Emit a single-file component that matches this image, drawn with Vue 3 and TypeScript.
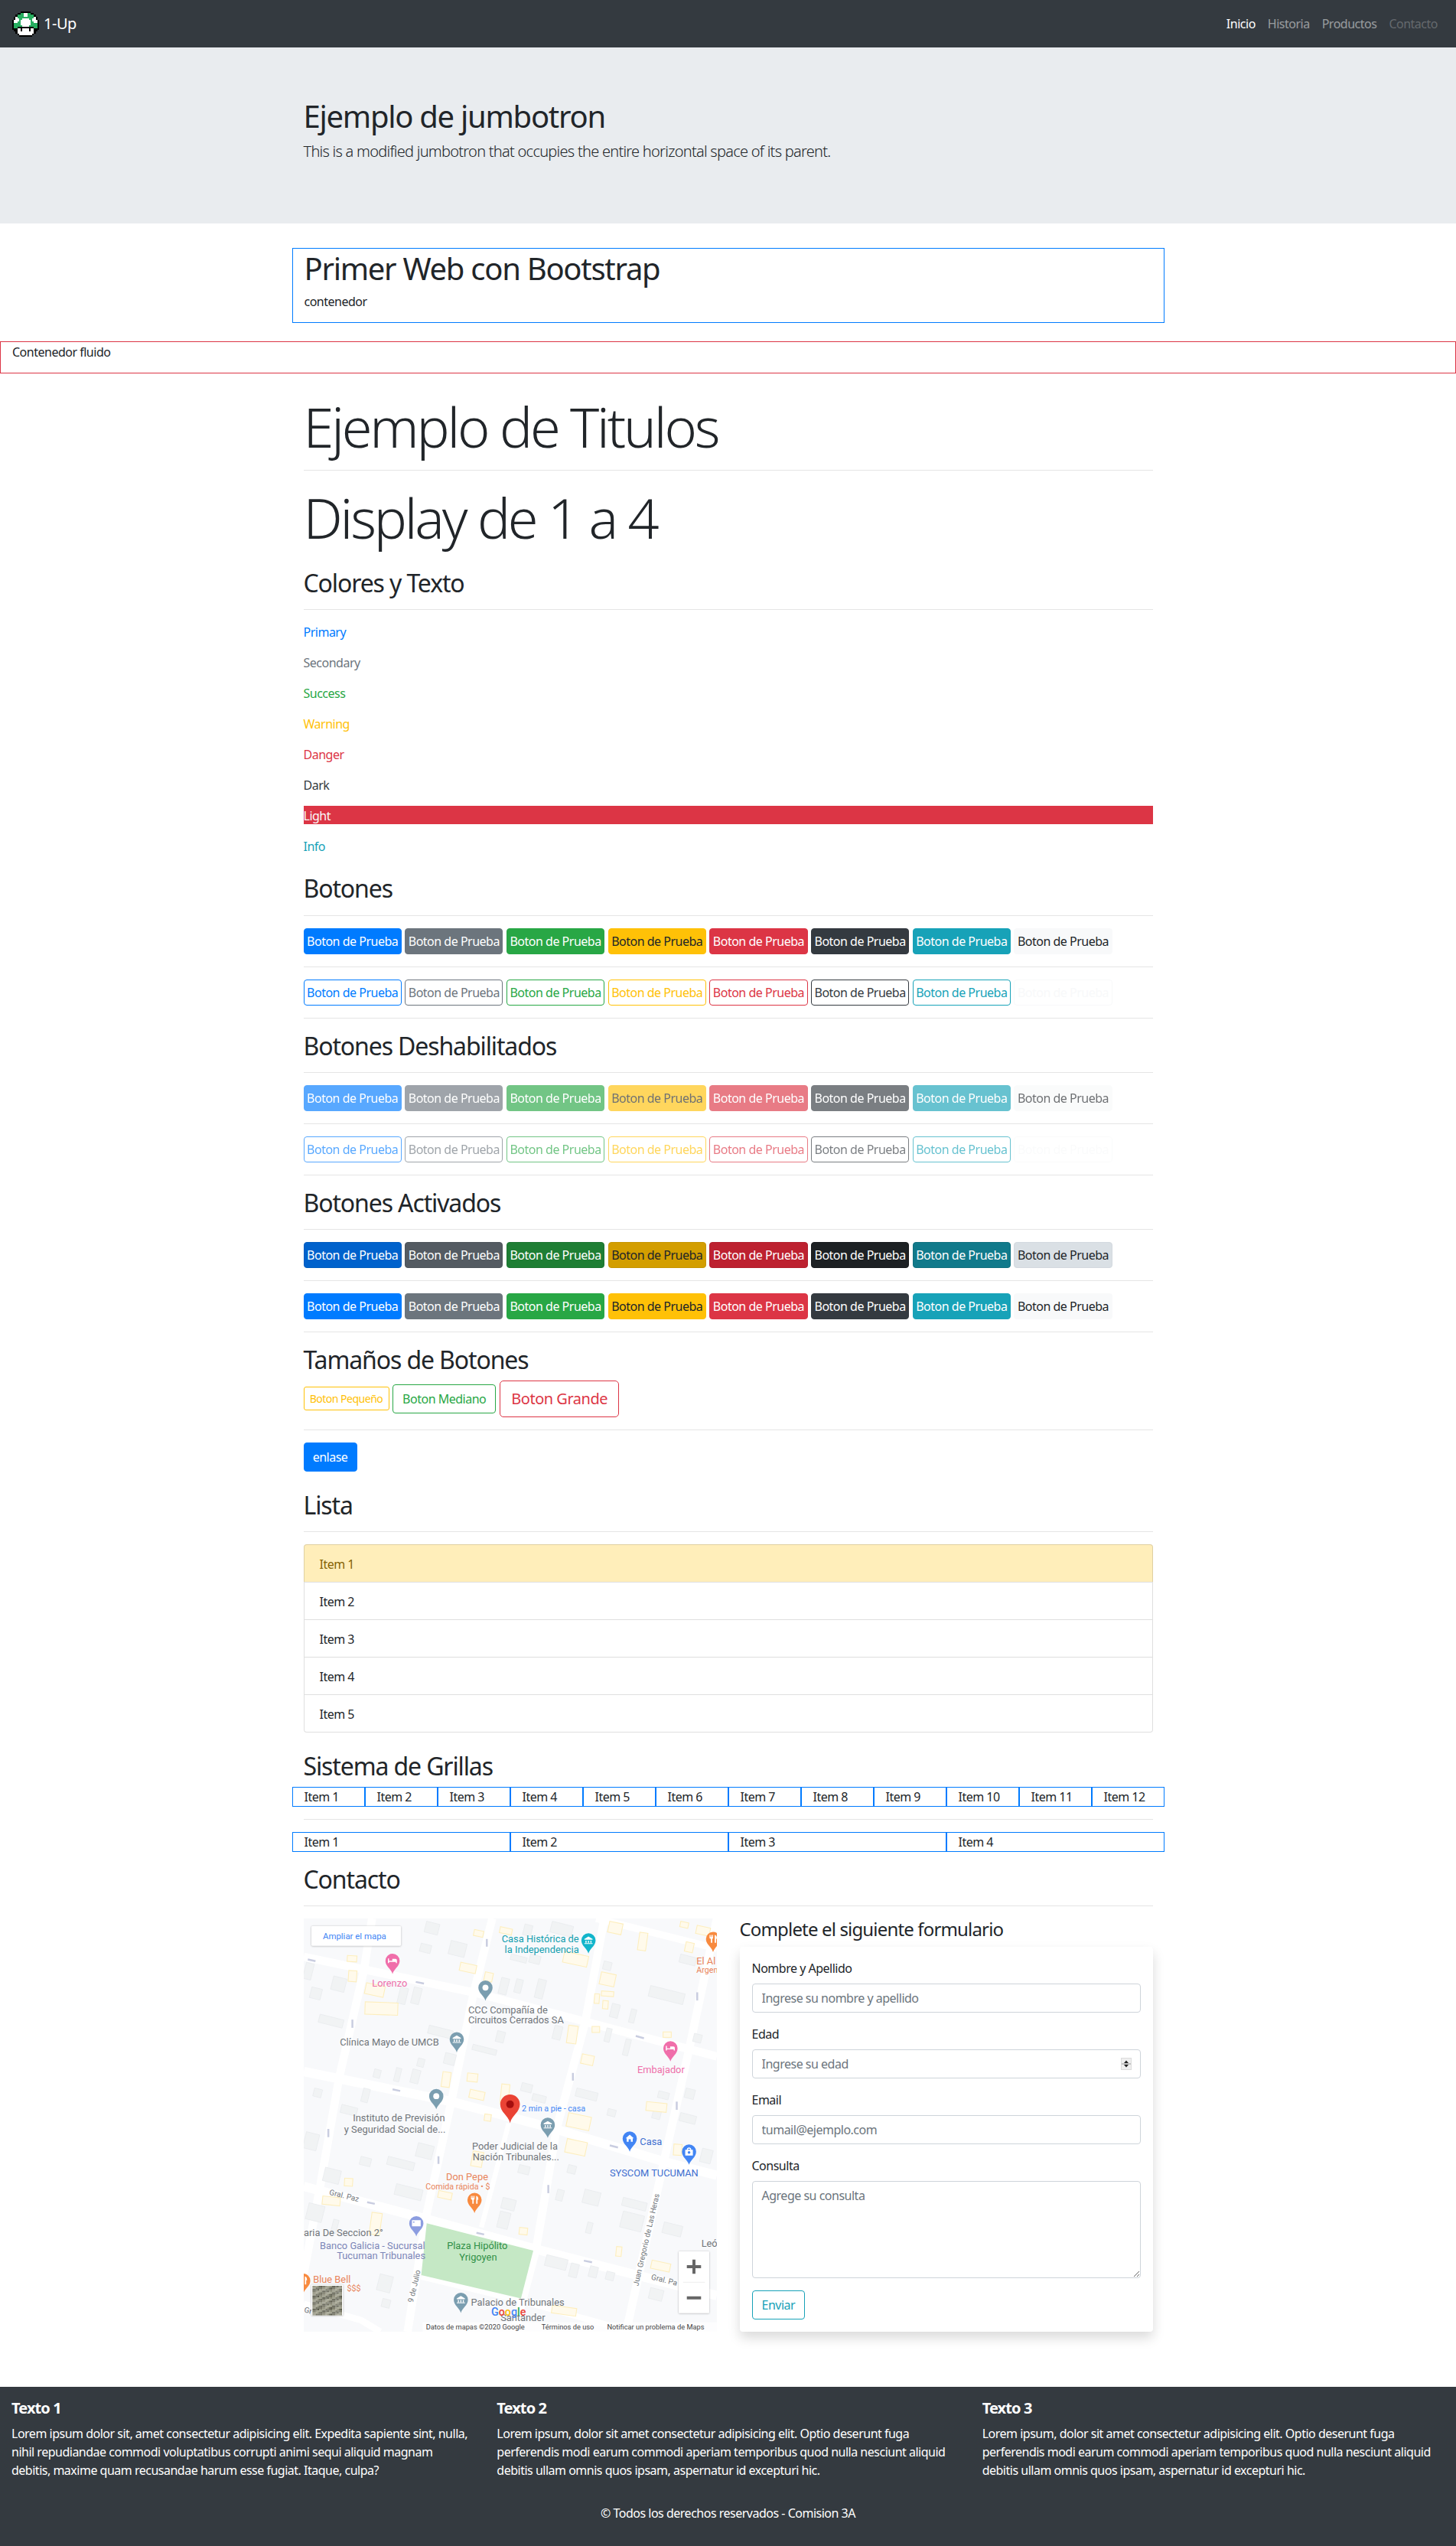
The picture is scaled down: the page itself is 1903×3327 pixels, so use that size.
<template>
  <div class="page">
    <nav class="navbar">
      <a class="brand">
        <svg class="logo" viewBox="0 0 16 15" shape-rendering="crispEdges">
          <rect v-for="(p, i) in mushroomPixels" :key="i" :x="p.x" :y="p.y" width="1" height="1" :fill="p.fill" />
        </svg>
        <span>1-Up</span>
      </a>
      <ul class="nav-links">
        <li class="active">Inicio</li>
        <li>Historia</li>
        <li>Productos</li>
        <li class="disabled">Contacto</li>
      </ul>
    </nav>

    <header class="jumbotron">
      <div class="container">
        <h1 class="h1">Ejemplo de jumbotron</h1>
        <p class="lead">This is a modified jumbotron that occupies the entire horizontal space of its parent.</p>
      </div>
    </header>

    <div class="container boxed-primary">
      <h1 class="h1">Primer Web con Bootstrap</h1>
      <p>contenedor</p>
    </div>
    <div class="boxed-fluid">
      <p>Contenedor fluido</p>
    </div>

    <main class="container main">
      <h1 class="display">Ejemplo de Titulos</h1>
      <hr />
      <h1 class="display display-after">Display de 1 a 4</h1>

      <h2 class="h2">Colores y Texto</h2>
      <hr />
      <p v-for="c in textColors" :key="c.label" :class="['swatch', c.cls]">{{ c.label }}</p>

      <h2 class="h2 botones">Botones</h2>
      <hr />
      <template v-for="(group, g) in buttonGroups" :key="g">
        <h2 v-if="group.title" class="h2">{{ group.title }}</h2>
        <hr v-if="group.title" />
        <div class="btn-row">
          <button v-for="v in variants" :key="v" :class="['btn', 'btn-test', `${group.kind}-${v}`, group.extra]">Boton de Prueba</button>
        </div>
        <hr />
      </template>

      <h2 class="h2">Tamaños de Botones</h2>
      <div class="size-row">
        <button class="btn btn-sm outline-warning">Boton Pequeño</button>
        <button class="btn btn-md outline-success">Boton Mediano</button>
        <button class="btn btn-lg outline-danger">Boton Grande</button>
      </div>
      <hr />
      <a class="btn btn-md solid-primary enlase">enlase</a>

      <h2 class="h2">Lista</h2>
      <hr />
      <ul class="list-group">
        <li v-for="n in 5" :key="n" :class="{ warning: n === 1 }">Item {{ n }}</li>
      </ul>

      <h2 class="h2">Sistema de Grillas</h2>
      <div class="grid-row grid-12">
        <div v-for="n in 12" :key="n" class="cell">Item {{ n }}</div>
      </div>
      <hr />
      <div class="grid-row grid-4">
        <div v-for="n in 4" :key="n" class="cell">Item {{ n }}</div>
      </div>

      <h2 class="h2">Contacto</h2>
      <hr />
      <div class="contact">
        <div class="map">
          <svg viewBox="20 20 1512 1512" width="540" height="540" class="map-svg">
            <rect x="20" y="20" width="1512" height="1512" fill="#f8f9fb" />
            <polyline v-for="(r, i) in roads" :key="'r' + i" :points="r.p" fill="none" stroke="#fff" :stroke-width="r.w" />
            <rect v-for="(b, i) in greyBlocks" :key="'g' + i" :x="b[0]" :y="b[1]" :width="b[2]" :height="b[3]" :transform="`rotate(14 ${b[0]} ${b[1]})`" fill="#f1f3f4" stroke="#e8eaed" stroke-width="2" />
            <rect v-for="(b, i) in yellowBlocks" :key="'y' + i" :x="b[0]" :y="b[1]" :width="b[2]" :height="b[3]" :transform="`rotate(${b[4] ?? 12} ${b[0]} ${b[1]})`" fill="#fffaeb" stroke="#fdeebd" stroke-width="3" />
            <polygon points="470,1135 860,1235 815,1410 450,1325" fill="#c5e8c5" />
            <path v-for="(a, i) in arrows" :key="'a' + i" :d="`M${a[0]} ${a[1]}l${a[2]} ${a[3]}`" stroke="#c9cde0" stroke-width="7" fill="none" />

            <g v-for="(pin, i) in pins" :key="'p' + i">
              <path :d="pinPath(pin.x, pin.y, 26)" :fill="pin.color" />
              <circle v-if="pin.icon === 'dot'" :cx="pin.x" :cy="pin.y" r="11" fill="#fff" />
              <path v-else-if="pin.icon === 'museum'" :d="`M${pin.x - 15} ${pin.y - 5}l15 -9l15 9v3h-30zM${pin.x - 11} ${pin.y + 1}h4v8h-4zM${pin.x - 2} ${pin.y + 1}h4v8h-4zM${pin.x + 7} ${pin.y + 1}h4v8h-4zM${pin.x - 15} ${pin.y + 10}h30v3h-30z`" fill="#fff" />
              <path v-else-if="pin.icon === 'bed'" :d="`M${pin.x - 17} ${pin.y - 9}h4v9h12v-7h12a5 5 0 0 1 5 5v10h-4v-4h-25v4h-4z`" fill="#fff" />
              <path v-else-if="pin.icon === 'home'" :d="`M${pin.x} ${pin.y - 14}l15 13h-4v13h-7v-9h-8v9h-7v-13h-4z`" fill="#fff" />
              <path v-else-if="pin.icon === 'bag'" :d="`M${pin.x - 14} ${pin.y - 7}h6a8 8 0 0 1 16 0h6v21h-28zM${pin.x - 4} ${pin.y - 7}h8a4 4 0 0 0 -8 0z`" fill="#fff" />
              <path v-else-if="pin.icon === 'fork'" :d="`M${pin.x - 13} ${pin.y - 15}h3v8h2v-8h3v8h2v-8h3v12l-3 3v14h-5v-14l-5 -3zM${pin.x + 6} ${pin.y - 15}c6 0 8 6 8 14h-3v15h-5z`" fill="#fff" />
              <path v-else-if="pin.icon === 'bank'" :d="`M${pin.x - 16} ${pin.y - 11}h32v22h-32zM${pin.x - 12} ${pin.y - 6}v4h5v-4z`" fill="#fff" />
              <circle v-if="pin.icon === 'bag'" :cx="pin.x" :cy="pin.y + 3" r="5" :fill="pin.color" />
            </g>

            <path :d="pinPath(775, 700, 36, 68)" fill="#ea4335" />
            <circle cx="775" cy="700" r="14" fill="#a50e0e" />

            <text v-for="(t, i) in labels" :key="'t' + i" :x="t.x" :y="t.y" :fill="t.c" :font-size="t.s ?? 36" :text-anchor="t.a ?? 'start'" :transform="t.r ? `rotate(${t.r} ${t.x} ${t.y})` : undefined">{{ t.t }}</text>

            <text x="706" y="1474" font-size="40" font-weight="500"><tspan fill="#4285f4">G</tspan><tspan fill="#ea4335">o</tspan><tspan fill="#fbbc05">o</tspan><tspan fill="#4285f4">g</tspan><tspan fill="#34a853">l</tspan><tspan fill="#ea4335">e</tspan></text>

            <rect class="map-card" x="48" y="48" width="328" height="72" rx="4" fill="#fff" />
            <text x="90" y="95" font-size="32" fill="#4285f4">Ampliar el mapa</text>

            <rect class="map-card" x="48" y="1360" width="116" height="112" fill="#fff" />
            <rect v-for="(s, i) in satellite" :key="'s' + i" :x="s.x" :y="s.y" width="6" height="6" :fill="s.c" />

            <rect x="455" y="1497" width="1077" height="35" fill="#fff" fill-opacity="0.7" />
            <text x="467" y="1523" font-size="26" fill="#444">Datos de mapas ©2020 Google</text>
            <text x="890" y="1523" font-size="26" fill="#444">Términos de uso</text>
            <text x="1130" y="1523" font-size="26" fill="#444">Notificar un problema de Maps</text>

            <rect class="map-card" x="1392" y="1238" width="112" height="226" rx="3" fill="#fff" />
            <path d="M1408 1351h80" stroke="#e6e6e6" stroke-width="2" />
            <path d="M1422 1294h52M1448 1268v52M1422 1408h52" stroke="#666" stroke-width="11" fill="none" />
          </svg>
        </div>
        <div class="form-col">
          <h4 class="h4">Complete el siguiente formulario</h4>
          <form class="card" @submit.prevent>
            <div class="field">
              <label>Nombre y Apellido</label>
              <input type="text" placeholder="Ingrese su nombre y apellido" />
            </div>
            <div class="field number-field">
              <label>Edad</label>
              <input type="number" placeholder="Ingrese su edad" />
              <span class="spinner">
                <svg viewBox="0 0 14 16" width="14" height="16">
                  <rect width="14" height="16" fill="#dcdcdc" />
                  <rect x="1" y="1" width="12" height="14" fill="#efefef" />
                  <path d="M7 3.5l3 3.5h-6z M7 12.5l3 -3.5h-6z" fill="#222" />
                  <path d="M1 8h12" stroke="#999" />
                </svg>
              </span>
            </div>
            <div class="field">
              <label>Email</label>
              <input type="email" placeholder="tumail@ejemplo.com" />
            </div>
            <div class="field">
              <label>Consulta</label>
              <textarea placeholder="Agrege su consulta"></textarea>
            </div>
            <button class="btn btn-md outline-info">Enviar</button>
          </form>
        </div>
      </div>
    </main>

    <footer class="footer">
      <div class="footer-cols">
        <div v-for="col in footerCols" :key="col.title" class="footer-col">
          <h5>{{ col.title }}</h5>
          <p>
            <template v-for="(line, i) in col.lines" :key="i">{{ line }}<br /></template>
          </p>
        </div>
      </div>
      <p class="copy">© Todos los derechos reservados - Comision 3A</p>
    </footer>
  </div>
</template>

<script setup lang="ts">
const mushroom = [
  '.....KKKKKK.....',
  '...KKGGWWGGKK...',
  '..KGGGGWWGGGGK..',
  '.KWGGGGGGGGGGWK.',
  '.KWWGGWWWWGGWWK.',
  'KWWWGWWWWWWGWWWK',
  'KWWGGWWWWWWGGWWK',
  'KGGGGWWWWWWGGGGK',
  'KGGGGGWWWWGGGGGK',
  'KGGKKKKKKKKKKGGK',
  'KKKWWKWWWWKWWKKK',
  '.KKWWKWWWWKWWKK.',
  '..KWWWWWWWWWWK..',
  '...KWWWWWWWWK...',
  '....KKKKKKKK....'
]
const pixelColors: Record<string, string> = { K: '#000', G: '#27ae60', W: '#fff' }
const mushroomPixels = mushroom.flatMap((row, y) =>
  row.split('').flatMap((ch, x) => (ch === '.' ? [] : [{ x, y, fill: pixelColors[ch] }]))
)

const textColors = [
  { label: 'Primary', cls: 'text-primary' },
  { label: 'Secondary', cls: 'text-secondary' },
  { label: 'Success', cls: 'text-success' },
  { label: 'Warning', cls: 'text-warning' },
  { label: 'Danger', cls: 'text-danger' },
  { label: 'Dark', cls: 'text-dark' },
  { label: 'Light', cls: 'text-light' },
  { label: 'Info', cls: 'text-info' }
]

const variants = ['primary', 'secondary', 'success', 'warning', 'danger', 'dark', 'info', 'light']

const buttonGroups = [
  { title: '', kind: 'solid', extra: '' },
  { title: '', kind: 'outline', extra: '' },
  { title: 'Botones Deshabilitados', kind: 'solid', extra: 'is-disabled' },
  { title: '', kind: 'outline', extra: 'is-disabled' },
  { title: 'Botones Activados', kind: 'active', extra: '' },
  { title: '', kind: 'solid', extra: '' }
]

const footerCols = [
  {
    title: 'Texto 1',
    lines: [
      'Lorem ipsum dolor sit, amet consectetur adipisicing elit. Expedita sapiente sint, nulla,',
      'nihil repudiandae commodi voluptatibus corrupti animi sequi aliquid magnam',
      'debitis, maxime quam recusandae harum esse fugiat. Itaque, culpa?'
    ]
  },
  {
    title: 'Texto 2',
    lines: [
      'Lorem ipsum, dolor sit amet consectetur adipisicing elit. Optio deserunt fuga',
      'perferendis modi earum commodi aperiam temporibus quod nulla nesciunt aliquid',
      'debitis ullam omnis quos ipsam, aspernatur id excepturi hic.'
    ]
  },
  {
    title: 'Texto 3',
    lines: [
      'Lorem ipsum, dolor sit amet consectetur adipisicing elit. Optio deserunt fuga',
      'perferendis modi earum commodi aperiam temporibus quod nulla nesciunt aliquid',
      'debitis ullam omnis quos ipsam, aspernatur id excepturi hic.'
    ]
  }
]

// map data, in the coordinates of a 1512 unit square
const roads = [
  { p: '270,20 240,210 150,600 80,1000 20,1320', w: 30 },
  { p: '710,20 640,300 560,690 470,1100 400,1532', w: 30 },
  { p: '1120,20 1050,400 945,790 870,1230 790,1532', w: 30 },
  { p: '1532,20 1430,500 1340,900 1200,1532', w: 30 },
  { p: '770,770 670,1150', w: 18 },
  { p: '20,160 640,290 1060,400 1532,525', w: 30 },
  { p: '1090,20 1532,130', w: 26 },
  { p: '20,580 560,690 940,790 1340,910 1532,960', w: 34 },
  { p: '20,1000 470,1120 870,1230 1532,1400', w: 34 },
  { p: '450,1330 820,1420 1220,1532', w: 22 },
  { p: '20,1430 230,1490 300,1532', w: 24 }
]

const greyBlocks: number[][] = [
  [470, 30, 50, 40], [560, 100, 60, 50], [450, 110, 40, 30], [830, 40, 30, 40], [930, 30, 80, 40],
  [780, 150, 60, 20], [850, 150, 40, 30], [30, 180, 30, 60], [130, 230, 50, 50], [50, 270, 40, 40],
  [375, 270, 30, 60], [425, 270, 30, 60], [745, 235, 30, 60], [800, 240, 25, 50], [880, 240, 30, 70],
  [80, 370, 90, 30], [480, 410, 90, 30], [730, 430, 30, 40], [640, 480, 90, 20], [940, 410, 30, 50],
  [1120, 175, 30, 30], [1290, 265, 130, 40], [1150, 330, 30, 50], [1220, 350, 20, 50], [1400, 150, 60, 30],
  [1130, 420, 20, 50], [1200, 460, 20, 60], [1450, 440, 30, 30], [540, 510, 40, 40], [440, 530, 25, 30],
  [360, 565, 20, 50], [280, 570, 25, 30], [420, 570, 30, 50], [60, 640, 30, 30], [240, 640, 25, 50],
  [160, 700, 60, 30], [30, 800, 50, 60], [440, 840, 60, 50], [230, 890, 40, 30], [330, 890, 100, 30],
  [100, 930, 60, 50], [360, 990, 100, 40], [820, 620, 40, 30], [860, 660, 50, 25], [1020, 640, 80, 30],
  [1320, 650, 40, 25], [1420, 640, 35, 35], [1135, 715, 30, 25], [1300, 720, 30, 30], [1400, 730, 60, 30],
  [810, 920, 40, 30], [950, 1010, 25, 40], [1050, 1010, 60, 50], [990, 920, 30, 30], [1190, 1040, 90, 30],
  [750, 1040, 50, 40], [740, 1090, 40, 60], [1190, 1090, 80, 60], [1340, 1130, 70, 40], [1060, 1130, 20, 40],
  [910, 1250, 80, 40], [1000, 1280, 30, 50], [1070, 1290, 30, 40], [1130, 1310, 30, 30], [300, 1320, 50, 60],
  [310, 1410, 30, 30], [40, 1060, 60, 60], [130, 1120, 20, 50], [1290, 1370, 50, 40], [1480, 860, 40, 50]
]

const yellowBlocks: number[][] = [
  [180, 155, 35, 22, 4], [185, 210, 30, 40, 4], [250, 255, 70, 40], [245, 325, 120, 45, 2], [645, 60, 35, 22],
  [740, 50, 45, 22], [595, 180, 60, 30], [685, 215, 30, 32], [975, 140, 90, 40], [1140, 30, 50, 40],
  [1250, 70, 30, 65, 8], [1400, 30, 30, 20], [1460, 45, 50, 30], [1420, 105, 30, 35], [1110, 215, 55, 45],
  [1085, 295, 18, 35, 4], [1110, 285, 45, 18, 4], [1115, 320, 20, 30, 4], [990, 410, 35, 65, 8], [1075, 415, 28, 22, 0],
  [1335, 435, 30, 20, 0], [1040, 515, 45, 35], [530, 580, 30, 55, 8], [620, 585, 38, 30, 6], [630, 645, 55, 30],
  [745, 625, 30, 70, 6], [683, 735, 24, 24, 8], [1275, 690, 75, 32, 6], [990, 730, 85, 50], [985, 825, 75, 50],
  [640, 870, 40, 55, 10], [1375, 845, 30, 40, 4], [170, 970, 30, 28, 4], [90, 1035, 65, 30, 6], [515, 1015, 50, 25],
  [270, 1095, 38, 80, 8], [810, 1150, 30, 25, 6], [1165, 1220, 20, 35, 6], [1295, 1270, 70, 30], [930, 1435, 90, 28, 8]
]

const arrows: number[][] = [
  [35, 170, 28, 6], [430, 252, 30, 6], [690, 95, 0, 28], [198, 390, 0, 30], [1235, 450, 30, 8], [1460, 290, 0, 30],
  [345, 645, 28, 6], [1005, 585, 0, 28], [110, 790, 0, 30], [1140, 850, 30, 8], [1385, 690, 0, 30], [513, 890, 0, 28],
  [252, 1058, 28, 6], [915, 995, 0, 30], [652, 1170, 28, 6], [1045, 1272, 30, 6]
]

interface MapPin {
  x: number
  y: number
  color: string
  icon: string
}

const slate = '#7b9eb0'
const pins: MapPin[] = [
  { x: 345, y: 175, color: '#f06eaa', icon: 'bed' },
  { x: 1062, y: 100, color: '#12b5cb', icon: 'museum' },
  { x: 685, y: 273, color: slate, icon: 'dot' },
  { x: 580, y: 462, color: slate, icon: 'museum' },
  { x: 1362, y: 495, color: '#f06eaa', icon: 'bed' },
  { x: 505, y: 670, color: slate, icon: 'dot' },
  { x: 913, y: 775, color: slate, icon: 'museum' },
  { x: 1213, y: 825, color: '#4285f4', icon: 'home' },
  { x: 1430, y: 873, color: '#4285f4', icon: 'bag' },
  { x: 645, y: 1050, color: '#f88a3f', icon: 'fork' },
  { x: 432, y: 1135, color: '#8c9de0', icon: 'bank' },
  { x: 595, y: 1415, color: slate, icon: 'museum' },
  { x: 1518, y: 95, color: '#f88a3f', icon: 'fork' },
  { x: 18, y: 1345, color: '#f88a3f', icon: 'fork' }
]

function pinPath(x: number, y: number, r: number, tip = r * 1.85): string {
  return `M${x} ${y + tip}C${x - r * 0.2} ${y + tip * 0.6} ${x - r} ${y + r * 0.8} ${x - r} ${y}A${r} ${r} 0 1 1 ${x + r} ${y}C${x + r} ${y + r * 0.8} ${x + r * 0.2} ${y + tip * 0.6} ${x} ${y + tip}Z`
}

interface MapLabel {
  t: string
  x: number
  y: number
  c: string
  s?: number
  a?: string
  r?: number
}

const grey = '#70757a'
const labels: MapLabel[] = [
  { t: 'Casa Histórica de', x: 1027, y: 106, c: '#129eaf', a: 'end' },
  { t: 'la Independencia', x: 1027, y: 146, c: '#129eaf', a: 'end' },
  { t: 'Lorenzo', x: 270, y: 268, c: '#ee6fa9' },
  { t: 'El Al', x: 1457, y: 187, c: '#e8845a' },
  { t: 'Argen', x: 1457, y: 220, c: '#e8845a', s: 30 },
  { t: 'CCC Compañía de', x: 622, y: 366, c: grey },
  { t: 'Circuitos Cerrados SA', x: 622, y: 405, c: grey },
  { t: 'Clínica Mayo de UMCB', x: 152, y: 486, c: grey },
  { t: 'Embajador', x: 1241, y: 587, c: '#ee6fa9' },
  { t: '2 min a pie - casa', x: 818, y: 726, c: '#4285f4', s: 30 },
  { t: 'Instituto de Previsión', x: 200, y: 763, c: grey },
  { t: 'y Seguridad Social de...', x: 168, y: 803, c: grey },
  { t: 'Poder Judicial de la', x: 636, y: 867, c: grey },
  { t: 'Nación Tribunales...', x: 638, y: 906, c: grey },
  { t: 'Casa', x: 1250, y: 850, c: '#3f6fd0' },
  { t: 'SYSCOM TUCUMAN', x: 1140, y: 965, c: '#3f6fd0' },
  { t: 'Don Pepe', x: 541, y: 977, c: '#e8845a' },
  { t: 'Comida rápida • $', x: 466, y: 1010, c: '#e8845a', s: 30 },
  { t: 'Gral. Paz', x: 112, y: 1030, c: grey, s: 28, r: 14 },
  { t: 'aria De Seccion 2°', x: 20, y: 1183, c: grey },
  { t: 'Banco Galicia - Sucursal', x: 79, y: 1229, c: '#7c86b8' },
  { t: 'Tucuman Tribunales', x: 141, y: 1267, c: '#7c86b8' },
  { t: 'Plaza Hipólito', x: 544, y: 1231, c: '#2f8f46' },
  { t: 'Yrigoyen', x: 589, y: 1271, c: '#2f8f46' },
  { t: 'Blue Bell', x: 54, y: 1353, c: '#e8845a' },
  { t: '$$$', x: 178, y: 1385, c: '#e8845a', s: 30 },
  { t: 'Palacio de Tribunales', x: 632, y: 1438, c: grey },
  { t: 'Santander', x: 740, y: 1492, c: grey },
  { t: 'Juan Gregorio de Las Heras', x: 1244, y: 1366, c: grey, s: 28, r: -77 },
  { t: '9 de Julio', x: 420, y: 1426, c: grey, s: 28, r: -77 },
  { t: 'Gral. Pa', x: 1290, y: 1340, c: grey, s: 28, r: 14 },
  { t: 'Leó', x: 1475, y: 1220, c: grey },
  { t: 'Gr', x: 20, y: 1460, c: grey, s: 28, r: 14 }
]

// satellite thumbnail: a repeatable speckle of earth tones
const satelliteTones = ['#8b8a76', '#6e6e5c', '#a3a38f', '#5a5a4b', '#979885', '#77786a']
const satellite = Array.from({ length: 324 }, (_, i) => ({
  x: 52 + (i % 18) * 6,
  y: 1364 + Math.floor(i / 18) * 6,
  c: satelliteTones[(i * i * 31 + i * 17 + (i >> 2)) % 6]
}))
</script>

<style>
body {
  margin: 0;
}
</style>

<style scoped>
.page {
  font-family: "Noto Sans", "Open Sans", sans-serif;
  font-size: 16px;
  line-height: 1.5;
  color: #212529;
  letter-spacing: -0.031em;
}

* {
  box-sizing: border-box;
}

p {
  padding-top: 1px;
  margin: 0 0 15px;
}

.navbar {
  height: 62px;
  background: #343a40;
  display: flex;
  align-items: center;
  justify-content: space-between;
  padding: 8px 16px;
}

.brand {
  display: flex;
  align-items: center;
  gap: 6px;
  color: #fff;
  font-size: 20px;
}

.logo {
  width: 35px;
  height: 35px;
}

.nav-links {
  display: flex;
  list-style: none;
  margin: 0;
  padding: 0;
}

.nav-links li {
  padding: 8px;
  color: rgba(255, 255, 255, 0.5);
}

.nav-links li.active {
  color: #fff;
}

.nav-links li.disabled {
  color: rgba(255, 255, 255, 0.25);
}

.container {
  width: 1140px;
  margin: 0 auto;
  padding: 0 15px;
}

.jumbotron {
  background: #e9ecef;
  padding: 64px 0;
  margin-bottom: 32px;
}

.h1 {
  font-size: 40px;
  font-weight: 400;
  line-height: 1.2;
  letter-spacing: -0.032em;
  padding-top: 2px;
  margin: 0 0 6px;
}

.lead {
  font-size: 20px;
  font-weight: 300;
  letter-spacing: -0.037em;
}

.boxed-primary {
  border: 1px solid #007bff;
  margin-bottom: 24px;
}

.boxed-fluid {
  border: 1px solid #dc3545;
  padding: 0 15px;
}

.main {
  margin-top: 24px;
  margin-bottom: 72px;
}

.display {
  font-size: 72px;
  font-weight: 300;
  line-height: 1.2;
  letter-spacing: -0.044em;
  padding-top: 2px;
  margin: 0 0 6px;
}

.display-after {
  margin-bottom: 22px;
}

.display + hr {
  margin-top: 14px;
}

.h2 {
  font-size: 32px;
  font-weight: 400;
  line-height: 1.2;
  letter-spacing: -0.035em;
  padding-top: 1px;
  margin: 0 0 7px;
}

.h2 + hr {
  margin-top: 15px;
}

.botones {
  margin-top: 24px;
}

.h4 {
  font-size: 24px;
  font-weight: 400;
  line-height: 1.2;
  letter-spacing: -0.035em;
  margin: 0 0 8px;
}

hr {
  border: 0;
  border-top: 1px solid rgba(0, 0, 0, 0.1);
  margin: 16px 0;
}

.swatch {
  height: 24px;
  margin-bottom: 16px;
}

.text-primary { color: #007bff; }
.text-secondary { color: #6c757d; }
.text-success { color: #28a745; }
.text-warning { color: #ffc107; }
.text-danger { color: #dc3545; }
.text-dark { color: #343a40; }
.text-light { color: #f8f9fa; background: #dc3545; }
.text-info { color: #17a2b8; }

.btn {
  display: inline-flex;
  align-items: center;
  justify-content: center;
  font-family: inherit;
  font-size: 16px;
  letter-spacing: inherit;
  line-height: 1.5;
  border: 1px solid transparent;
  border-radius: 4px;
  background: transparent;
  white-space: nowrap;
}

.btn-row {
  display: flex;
  gap: 4.4px;
}

.btn-test {
  width: 128.3px;
  height: 34px;
  padding: 4px;
}

.btn-sm {
  height: 31px;
  width: 112px;
  font-size: 14px;
  border-radius: 3px;
  padding: 0;
}

.btn-md {
  height: 38px;
  padding: 6px 12px;
}

.btn-lg {
  height: 48px;
  font-size: 20px;
  border-radius: 5px;
  padding: 8px 16px;
}

.size-row {
  display: flex;
  align-items: center;
  gap: 4.4px;
}

.size-row .btn-md {
  width: 135.6px;
  padding: 0;
}

.size-row .btn-lg {
  width: 156.6px;
  padding: 0;
}

.enlase {
  width: 70px;
  padding: 0;
  margin-bottom: 24px;
}

.solid-primary { background: #007bff; border-color: #007bff; color: #fff; }
.solid-secondary { background: #6c757d; border-color: #6c757d; color: #fff; }
.solid-success { background: #28a745; border-color: #28a745; color: #fff; }
.solid-warning { background: #ffc107; border-color: #ffc107; color: #212529; }
.solid-danger { background: #dc3545; border-color: #dc3545; color: #fff; }
.solid-dark { background: #343a40; border-color: #343a40; color: #fff; }
.solid-info { background: #17a2b8; border-color: #17a2b8; color: #fff; }
.solid-light { background: #f8f9fa; border-color: #f8f9fa; color: #212529; }

.outline-primary { border-color: #007bff; color: #007bff; }
.outline-secondary { border-color: #6c757d; color: #6c757d; }
.outline-success { border-color: #28a745; color: #28a745; }
.outline-warning { border-color: #ffc107; color: #ffc107; }
.outline-danger { border-color: #dc3545; color: #dc3545; }
.outline-dark { border-color: #343a40; color: #343a40; }
.outline-info { border-color: #17a2b8; color: #17a2b8; }
.outline-light { border-color: #f8f9fa; color: #f8f9fa; }

.active-primary { background: #0062cc; border-color: #005cbf; color: #fff; }
.active-secondary { background: #545b62; border-color: #4e555b; color: #fff; }
.active-success { background: #1e7e34; border-color: #1c7430; color: #fff; }
.active-warning { background: #d39e00; border-color: #c69500; color: #212529; }
.active-danger { background: #bd2130; border-color: #b21f2d; color: #fff; }
.active-dark { background: #1d2124; border-color: #171a1d; color: #fff; }
.active-info { background: #117a8b; border-color: #10707f; color: #fff; }
.active-light { background: #dae0e5; border-color: #d3d9df; color: #212529; }

.is-disabled {
  opacity: 0.65;
}

.list-group {
  list-style: none;
  margin: 0 0 24px;
  padding: 0;
}

.list-group li {
  padding: 13px 20px 11px;
  border: 1px solid rgba(0, 0, 0, 0.125);
  margin-top: -1px;
  background: #fff;
}

.list-group li:first-child {
  margin-top: 0;
  border-radius: 4px 4px 0 0;
}

.list-group li:last-child {
  border-radius: 0 0 4px 4px;
}

.list-group li.warning {
  background: #ffeeba;
  color: #856404;
}

.grid-row {
  display: grid;
  margin: 0 -15px;
}

.grid-12 {
  grid-template-columns: repeat(12, 1fr);
}

.grid-4 {
  grid-template-columns: repeat(4, 1fr);
  margin-bottom: 16px;
}

.cell {
  border: 1px solid #007bff;
  padding: 0 15px;
}

.contact {
  display: flex;
  gap: 30px;
}

.map {
  width: 540px;
  height: 540px;
  flex: none;
}

.map-svg {
  display: block;
  font-family: Roboto, sans-serif;
  letter-spacing: 0;
}

.map-card {
  filter: drop-shadow(0 1px 3px rgba(0, 0, 0, 0.3));
}

.form-col {
  width: 540px;
  flex: none;
}

.card {
  background: #fff;
  border-radius: 4px;
  box-shadow: 0 8px 16px rgba(0, 0, 0, 0.15);
  padding: 16px;
}

.field {
  margin-bottom: 16px;
}

.number-field {
  position: relative;
}

.spinner {
  position: absolute;
  right: 12px;
  bottom: 11px;
  width: 14px;
  height: 16px;
  line-height: 0;
}

.field label {
  display: block;
  margin-bottom: 8px;
}

.field input,
.field textarea {
  display: block;
  width: 100%;
  height: 38px;
  padding: 6px 12px;
  font-family: inherit;
  font-size: 16px;
  letter-spacing: inherit;
  line-height: 1.5;
  color: #495057;
  background: #fff;
  border: 1px solid #ced4da;
  border-radius: 4px;
  appearance: textfield;
}

.field textarea {
  height: 127px;
  appearance: auto;
}

.field input::placeholder,
.field textarea::placeholder {
  color: #6c757d;
  opacity: 1;
}

.field input::-webkit-inner-spin-button {
  appearance: none;
}

.footer {
  background: #343a40;
  color: #fff;
  padding-top: 16px;
}

.footer-cols {
  display: grid;
  grid-template-columns: repeat(3, 1fr);
}

.footer-col {
  padding: 0 15px;
  white-space: nowrap;
}

.footer-col h5 {
  font-size: 20px;
  font-weight: 700;
  line-height: 1.2;
  letter-spacing: -0.045em;
  margin: 0 0 8px;
}

.copy {
  text-align: center;
  margin: 0;
  padding: 17px 0 31px;
}
</style>
